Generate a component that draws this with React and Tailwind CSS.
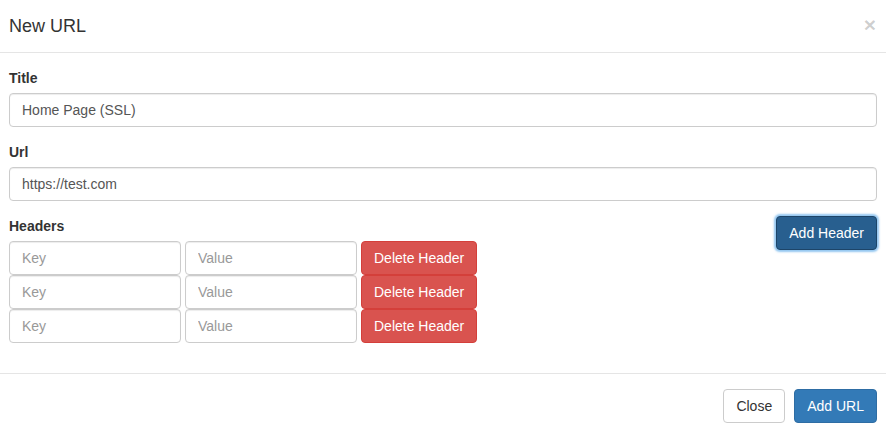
import React from "react";

const font = { fontFamily: '"Liberation Sans", Arial, sans-serif' };

const inputCls =
  "h-[34px] rounded-[4px] border border-[#ccc] bg-white px-3 text-[14px] text-[#555] shadow-[inset_0_1px_1px_rgba(0,0,0,0.075)] outline-none placeholder:text-[#999]";

const HeaderRow = () => (
  <div className="flex gap-1">
    <input className={`${inputCls} w-[172px]`} placeholder="Key" />
    <input className={`${inputCls} w-[172px]`} placeholder="Value" />
    <button className="h-[34px] rounded-[4px] border border-[#d43f3a] bg-[#d9534f] px-3 text-[14px] text-white">
      Delete Header
    </button>
  </div>
);

export default function App() {
  return (
    <div className="w-[886px] h-[434px] overflow-hidden bg-white text-[#333]" style={font}>
      {/* Header */}
      <div className="flex h-[53px] items-center justify-between border-b border-[#e5e5e5] px-[9px]">
        <h4 className="text-[18px] font-medium leading-none">New URL</h4>
        <button className="mr-[1px] -mt-[4px] text-[21px] font-bold leading-none text-black/20">×</button>
      </div>

      {/* Body */}
      <div className="px-[9px] pt-[15px] pb-[15px]">
        <div className="mb-[15px]">
          <label className="mb-[5px] block text-[14px] font-bold leading-[20px]">Title</label>
          <input className={`${inputCls} w-full`} defaultValue="Home Page (SSL)" />
        </div>
        <div className="mb-[15px]">
          <label className="mb-[5px] block text-[14px] font-bold leading-[20px]">Url</label>
          <input className={`${inputCls} w-full`} defaultValue="https://test.com" />
        </div>
        <div className="mb-[15px] flex items-start justify-between">
          <div>
            <label className="mb-[5px] block text-[14px] font-bold leading-[20px]">Headers</label>
            <div className="flex flex-col">
              <HeaderRow />
              <HeaderRow />
              <HeaderRow />
            </div>
          </div>
          <button className="h-[34px] rounded-[4px] border border-[#1d4569] bg-[#285f8f] px-3 text-[14px] text-white shadow-[0_0_2px_2px_rgba(102,175,233,0.7)]">
            Add Header
          </button>
        </div>
      </div>

      {/* Footer */}
      <div className="flex justify-end gap-[9px] border-t border-[#e5e5e5] px-[9px] pt-[15px]">
        <button className="h-[34px] rounded-[4px] border border-[#ccc] bg-white px-3 text-[14px] text-[#333]">
          Close
        </button>
        <button className="h-[34px] rounded-[4px] border border-[#2e6da4] bg-[#337ab7] px-3 text-[14px] text-white">
          Add URL
        </button>
      </div>
    </div>
  );
}
